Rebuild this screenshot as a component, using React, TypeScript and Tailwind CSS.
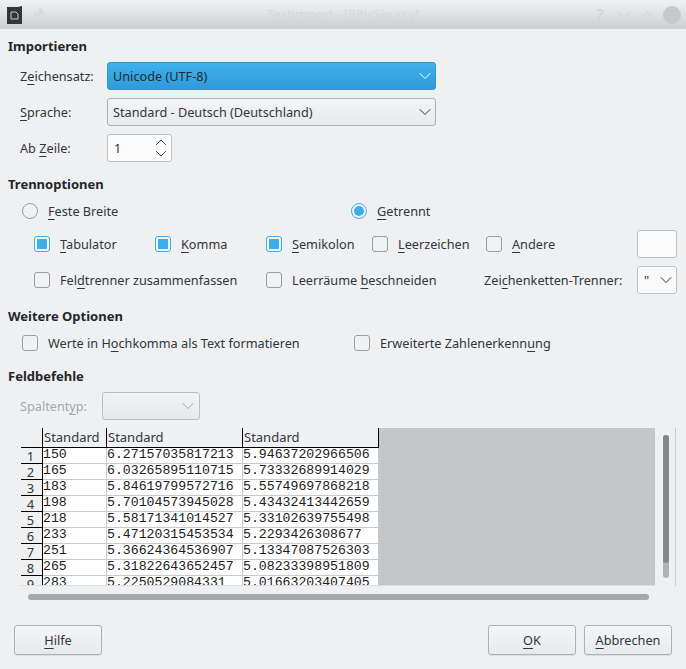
import { ChevronDown, ChevronUp, Pin } from 'lucide-react';
import type { ReactNode } from 'react';

const rows = [
    ['150', '6.27157035817213', '5.94637202966506'],
    ['165', '6.03265895110715', '5.73332689914029'],
    ['183', '5.84619799572716', '5.55749697868218'],
    ['198', '5.70104573945028', '5.43432413442659'],
    ['218', '5.58171341014527', '5.33102639755498'],
    ['233', '5.47120315453534', '5.2293426308677'],
    ['251', '5.36624364536907', '5.13347087526303'],
    ['265', '5.31822643652457', '5.08233398951809'],
    ['283', '5.2250529084331', '5.01663203407405'],
];

function Key({ children }: { children: ReactNode }) {
    return (
        <span className="underline decoration-1 underline-offset-[3px] [text-decoration-skip-ink:none]">
            {children}
        </span>
    );
}

function Heading({ children }: { children: ReactNode }) {
    return (
        <div className="h-5 pl-2 text-[13px] leading-5 font-bold text-[#232629]">
            {children}
        </div>
    );
}

function Check({ checked = false }: { checked?: boolean }) {
    return (
        <span
            className={`flex h-4 w-4 shrink-0 items-center justify-center rounded-[3px] border ${
                checked
                    ? 'border-[#3daee9] bg-[#f3f4f6]'
                    : 'border-[#9a9c9e] bg-[#f0f1f3]'
            }`}
        >
            {checked && <span className="h-[10px] w-[10px] bg-[#3daee9]" />}
        </span>
    );
}

function Radio({ checked = false }: { checked?: boolean }) {
    return (
        <span
            className={`flex h-4 w-4 shrink-0 items-center justify-center rounded-full border ${
                checked
                    ? 'border-[#3daee9] bg-[#f3f4f6]'
                    : 'border-[#9a9c9e] bg-[#f0f1f3]'
            }`}
        >
            {checked && (
                <span className="h-[10px] w-[10px] rounded-full bg-[#3daee9]" />
            )}
        </span>
    );
}

function CheckItem({
    width,
    checked,
    children,
}: {
    width: string;
    checked?: boolean;
    children: ReactNode;
}) {
    return (
        <div className={`flex items-center gap-[10px] ${width}`}>
            <Check checked={checked} />
            <span>{children}</span>
        </div>
    );
}

function PushButton({
    className,
    children,
}: {
    className?: string;
    children: ReactNode;
}) {
    return (
        <button
            className={`h-[30px] w-[88px] rounded-[3px] border border-[#aeb0b2] bg-gradient-to-b from-[#f4f5f6] to-[#e8e9ea] text-[12.7px] text-[#31363b] shadow-[0_1px_1px_rgba(0,0,0,0.08)] ${className ?? ''}`}
        >
            {children}
        </button>
    );
}

export default function App() {
    return (
        <div
            className="flex h-[669px] w-[686px] flex-col overflow-hidden bg-[#eff0f2] text-[12.7px] leading-5 text-[#31363b]"
            style={{ fontFamily: '"Noto Sans", sans-serif' }}
        >
            {/* Title bar */}
            <div className="relative flex h-[29px] shrink-0 items-center bg-gradient-to-b from-[#f0f2f4] to-[#cdcecf] pl-[7px]">
                <svg width="15" height="18" viewBox="0 0 15 18">
                    <path d="M0 1h11l4-1v18H0z" fill="#31363b" />
                    <path
                        d="M4 6h5l2 2v5H4z"
                        fill="none"
                        stroke="#c8cacc"
                        strokeWidth="1"
                    />
                </svg>
                <Pin className="ml-[10px] h-[13px] w-[13px] rotate-45 fill-[#d8dadc] text-[#d8dadc]" />
                <div className="absolute inset-x-0 top-[4px] text-center text-[13px] text-[#d6d8da]">
                    Textimport - [5PixSig.csv]
                </div>
                <div className="ml-auto flex items-center pr-[5px] text-[#d0d2d4]">
                    <span className="mr-[5px] w-[14px] text-center text-[16px]">
                        ?
                    </span>
                    <ChevronDown className="-mr-[1px] h-6 w-6" strokeWidth={1} />
                    <ChevronUp className="mr-[4px] h-6 w-6" strokeWidth={1} />
                    <span className="h-[18px] w-[18px] rounded-full bg-[#c6c9cb]" />
                </div>
            </div>

            {/* Importieren */}
            <div className="mt-[7px]">
                <Heading>Importieren</Heading>
            </div>
            <div className="mt-[6px] flex h-7 items-center pl-5">
                <span className="w-[87px]">
                    Z<Key>e</Key>ichensatz:
                </span>
                <div className="flex h-7 w-[329px] items-center justify-between rounded-[3px] border border-[#2f96cf] bg-gradient-to-b from-[#3fb1ee] to-[#2f9bd8] pl-[5px] text-[#1f2a33]">
                    <span>Unicode (UTF-8)</span>
                    <ChevronDown className="h-5 w-5 text-white" strokeWidth={1.2} />
                </div>
            </div>
            <div className="mt-2 flex h-7 items-center pl-5">
                <span className="w-[87px]">
                    <Key>S</Key>prache:
                </span>
                <div className="flex h-7 w-[329px] items-center justify-between rounded-[3px] border border-[#aeb0b2] bg-gradient-to-b from-[#f4f5f6] to-[#e8e9ea] pl-[5px]">
                    <span>Standard - Deutsch (Deutschland)</span>
                    <ChevronDown className="h-5 w-5 text-[#31363b]" strokeWidth={1.2} />
                </div>
            </div>
            <div className="mt-2 flex h-7 items-center pl-5">
                <span className="w-[87px]">
                    Ab <Key>Z</Key>eile:
                </span>
                <div className="flex h-7 w-[65px] items-center justify-between rounded-[3px] border border-[#c0c2c4] bg-[#fcfcfc] pr-1 pl-[6px]">
                    <span>1</span>
                    <svg
                        width="12"
                        height="18"
                        viewBox="0 0 12 18"
                        fill="none"
                        stroke="#4d5257"
                        strokeWidth="1"
                    >
                        <path d="M1 6l5-5 5 5" />
                        <path d="M1 12l5 5 5-5" />
                    </svg>
                </div>
            </div>

            {/* Trennoptionen */}
            <div className="mt-3">
                <Heading>Trennoptionen</Heading>
            </div>
            <div className="mt-[7px] flex h-5 items-center pl-[22px]">
                <div className="flex w-[329px] items-center gap-[10px]">
                    <Radio />
                    <span>
                        <Key>F</Key>este Breite
                    </span>
                </div>
                <div className="flex items-center gap-[10px]">
                    <Radio checked />
                    <span>
                        <Key>G</Key>etrennt
                    </span>
                </div>
            </div>
            <div className="mt-[9px] flex h-7 items-center pl-[34px]">
                <CheckItem width="w-[121px]" checked>
                    <Key>T</Key>abulator
                </CheckItem>
                <CheckItem width="w-[111px]" checked>
                    <Key>K</Key>omma
                </CheckItem>
                <CheckItem width="w-[106px]" checked>
                    <Key>S</Key>emikolon
                </CheckItem>
                <CheckItem width="w-[114px]">
                    <Key>L</Key>eerzeichen
                </CheckItem>
                <CheckItem width="w-[151px]">
                    <Key>A</Key>ndere
                </CheckItem>
                <div className="h-7 w-10 rounded-[3px] border border-[#c0c2c4] bg-[#fcfcfc]" />
            </div>
            <div className="mt-2 flex h-7 items-center pl-[34px]">
                <CheckItem width="w-[232px]">
                    Fel<Key>d</Key>trenner zusammenfassen
                </CheckItem>
                <CheckItem width="w-[218px]">
                    Leerräume <Key>b</Key>eschneiden
                </CheckItem>
                <span className="w-[153px]">
                    Zei<Key>c</Key>henketten-Trenner:
                </span>
                <div className="flex h-7 w-10 items-center justify-between rounded-[3px] border border-[#c0c2c4] bg-[#fafafb] pl-[6px]">
                    <span>"</span>
                    <ChevronDown className="h-5 w-5" strokeWidth={1.2} />
                </div>
            </div>

            {/* Weitere Optionen */}
            <div className="mt-3">
                <Heading>Weitere Optionen</Heading>
            </div>
            <div className="mt-[7px] flex h-5 items-center pl-[22px]">
                <CheckItem width="w-[332px]">
                    Werte in H<Key>o</Key>chkomma als Text formatieren
                </CheckItem>
                <CheckItem width="w-[300px]">
                    Erweiterte Zahlenerkenn<Key>u</Key>ng
                </CheckItem>
            </div>

            {/* Feldbefehle */}
            <div className="mt-[13px]">
                <Heading>Feldbefehle</Heading>
            </div>
            <div className="mt-[6px] flex h-7 items-center pl-5">
                <span className="w-[82px] text-[#a6a8aa]">
                    Spaltent<Key>y</Key>p:
                </span>
                <div className="flex h-7 w-[98px] items-center justify-end rounded-[3px] border border-[#bcbec0] bg-gradient-to-b from-[#f1f2f3] to-[#e8e9ea] pr-[1px] text-[#a0a2a4]">
                    <ChevronDown className="h-5 w-5" strokeWidth={1.2} />
                </div>
            </div>

            {/* Preview grid */}
            <div className="mt-2 flex h-[158px] pl-[21px]">
                <div className="flex h-[158px] w-[634px] flex-col overflow-hidden border-b border-[#dcdde0]">
                    <div className="flex h-[157px] overflow-hidden">
                        <div className="w-[358px] shrink-0 overflow-hidden bg-white">
                            <div className="flex h-5 shrink-0 border-b border-black bg-[#eff0f2] text-[13px] leading-[18px] text-[#31363b]">
                                <div className="w-[22px] shrink-0 border-r border-black" />
                                <div className="w-[64px] shrink-0 border-r border-black pl-[1px]">
                                    Standard
                                </div>
                                <div className="w-[136px] shrink-0 border-r border-black pl-[1px]">
                                    Standard
                                </div>
                                <div className="w-[136px] shrink-0 border-r border-black pl-[1px]">
                                    Standard
                                </div>
                            </div>
                            {rows.map((row, i) => (
                                <div
                                    key={row[0]}
                                    className="flex h-4 text-[13.2px] leading-[14px] text-[#202020]"
                                    style={{ fontFamily: '"Liberation Mono", monospace' }}
                                >
                                    <div
                                        className="flex w-[22px] shrink-0 items-end justify-center border-r border-b border-r-black border-b-black bg-[#eff0f2] pr-[2px] text-[13px] leading-[14px] text-[#31363b]"
                                        style={{ fontFamily: '"Noto Sans", sans-serif' }}
                                    >
                                        {i + 1}
                                    </div>
                                    <div className="w-[64px] shrink-0 border-r border-b border-[#c8c9ca]">
                                        {row[0]}
                                    </div>
                                    <div className="w-[136px] shrink-0 border-r border-b border-[#c8c9ca]">
                                        {row[1]}
                                    </div>
                                    <div className="w-[136px] shrink-0 border-r border-b border-[#c8c9ca]">
                                        {row[2]}
                                    </div>
                                </div>
                            ))}
                        </div>
                        <div className="flex-1 bg-[#c3c7ca]" />
                    </div>
                </div>
                {/* Vertical scrollbar */}
                <div className="flex w-[21px] shrink-0 border-r border-[#c9cbcd] pt-[7px] pl-[8px]">
                    <div className="relative h-[143px] w-[6px] rounded-full bg-[#b0b2b3]">
                        <div className="h-[128px] w-[6px] rounded-full bg-[#858687]" />
                    </div>
                </div>
            </div>

            {/* Horizontal scrollbar */}
            <div className="mt-2 pl-7">
                <div className="h-[6px] w-[621px] rounded-full bg-[#a5a7a8]" />
            </div>

            {/* Buttons */}
            <div className="mt-[25px] flex px-[14px]">
                <PushButton>
                    <Key>H</Key>ilfe
                </PushButton>
                <div className="ml-auto flex gap-2">
                    <PushButton>
                        <Key>O</Key>K
                    </PushButton>
                    <PushButton>
                        <Key>A</Key>bbrechen
                    </PushButton>
                </div>
            </div>
        </div>
    );
}
